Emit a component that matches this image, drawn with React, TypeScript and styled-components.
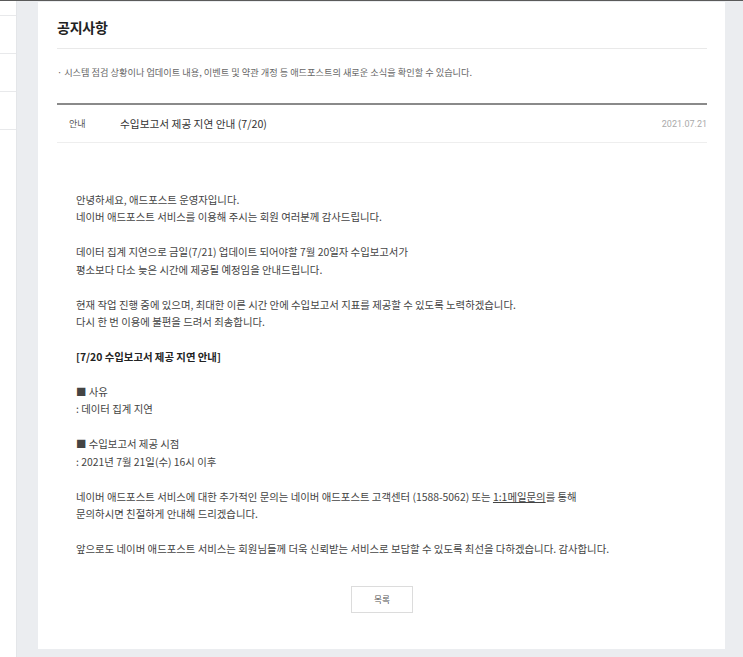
import React from "react";
import styled, { createGlobalStyle } from "styled-components";

const GlobalStyle = createGlobalStyle`
  html, body {
    margin: 0;
    padding: 0;
    background: #ebedf0;
  }
  body {
    font-family: "Noto Sans CJK KR", "Noto Sans", sans-serif;
    color: #444;
  }
  * {
    box-sizing: border-box;
  }
`;

const Page = styled.div`
  display: flex;
  height: 657px;
  border-top: 1px solid #5a5a5a;
  overflow: hidden;
`;

const SideNav = styled.ul`
  width: 17px;
  margin: 0;
  padding: 0;
  list-style: none;
  background: #fff;
  border-right: 1px solid #e4e6e9;
  flex-shrink: 0;
`;

const NavItem = styled.li<{ $first?: boolean }>`
  height: ${(p) => (p.$first ? "15px" : "38px")};
  border-bottom: 1px solid #e8e9eb;
`;

const Main = styled.main`
  flex: 1;
  padding: 1px 18px 8px 21px;
  display: flex;
`;

const Panel = styled.section`
  flex: 1;
  background: #fff;
  padding: 0 18px 33px 19px;
  display: flex;
  flex-direction: column;
`;

const Header = styled.header`
  height: 47px;
  display: flex;
  align-items: center;
  padding-top: 4px;
  border-bottom: 1px solid #e9e9e9;
`;

const Title = styled.h1`
  margin: 0;
  font-size: 14px;
  font-weight: 700;
  color: #222;
  letter-spacing: -0.2px;
`;

const Desc = styled.p`
  margin: 0;
  padding: 17px 0 24px;
  font-size: 9.2px;
  line-height: 13px;
  color: #666;
  &::before {
    content: "·";
    margin-right: 2px;
  }
`;

const ArticleHead = styled.div`
  display: flex;
  align-items: center;
  height: 40px;
  border-top: 2px solid #8a8a8a;
  border-bottom: 1px solid #eeeeee;
  padding: 0 0 0 12px;
`;

const Category = styled.span`
  width: 51px;
  font-size: 9px;
  color: #555;
`;

const Subject = styled.span`
  flex: 1;
  font-size: 10.7px;
  color: #333;
`;

const DateText = styled.span`
  font-family: "Roboto", "Noto Sans", sans-serif;
  font-size: 9px;
  color: #aaa;
`;

const Body = styled.div`
  padding: 48px 0 0 19px;
  font-size: 10.4px;
  line-height: 17.45px;
  color: #444;
`;

const Para = styled.p<{ $bold?: boolean }>`
  margin: 0 0 17.45px;
  font-weight: ${(p) => (p.$bold ? 700 : 400)};
  color: ${(p) => (p.$bold ? "#222" : "#444")};
  &:last-child {
    margin-bottom: 0;
  }
`;

const MailLink = styled.a`
  color: #444;
  text-decoration: underline;
`;

const Footer = styled.div`
  display: flex;
  justify-content: center;
  padding-top: 29px;
`;

const ListButton = styled.button`
  width: 62px;
  height: 27px;
  background: #fff;
  border: 1px solid #dcdcdc;
  font-family: inherit;
  font-size: 8.7px;
  color: #555;
  cursor: pointer;
`;

export default function App() {
  return (
    <>
      <GlobalStyle />
      <Page>
        <SideNav>
          <NavItem $first />
          <NavItem />
          <NavItem />
          <NavItem />
        </SideNav>
        <Main>
          <Panel>
            <Header>
              <Title>공지사항</Title>
            </Header>
            <Desc>
              시스템 점검 상황이나 업데이트 내용, 이벤트 및 약관 개정 등 애드포스트의 새로운 소식을 확인할 수 있습니다.
            </Desc>
            <ArticleHead>
              <Category>안내</Category>
              <Subject>수입보고서 제공 지연 안내 (7/20)</Subject>
              <DateText>2021.07.21</DateText>
            </ArticleHead>
            <Body>
              <Para>
                안녕하세요, 애드포스트 운영자입니다.
                <br />
                네이버 애드포스트 서비스를 이용해 주시는 회원 여러분께 감사드립니다.
              </Para>
              <Para>
                데이터 집계 지연으로 금일(7/21) 업데이트 되어야할 7월 20일자 수입보고서가
                <br />
                평소보다 다소 늦은 시간에 제공될 예정임을 안내드립니다.
              </Para>
              <Para>
                현재 작업 진행 중에 있으며, 최대한 이른 시간 안에 수입보고서 지표를 제공할 수 있도록 노력하겠습니다.
                <br />
                다시 한 번 이용에 불편을 드려서 죄송합니다.
              </Para>
              <Para $bold>[7/20 수입보고서 제공 지연 안내]</Para>
              <Para>
                ■ 사유
                <br />: 데이터 집계 지연
              </Para>
              <Para>
                ■ 수입보고서 제공 시점
                <br />: 2021년 7월 21일(수) 16시 이후
              </Para>
              <Para>
                네이버 애드포스트 서비스에 대한 추가적인 문의는 네이버 애드포스트 고객센터 (1588-5062) 또는{" "}
                <MailLink>1:1메일문의</MailLink>를 통해
                <br />
                문의하시면 친절하게 안내해 드리겠습니다.
              </Para>
              <Para>
                앞으로도 네이버 애드포스트 서비스는 회원님들께 더욱 신뢰받는 서비스로 보답할 수 있도록 최선을 다하겠습니다. 감사합니다.
              </Para>
            </Body>
            <Footer>
              <ListButton>목록</ListButton>
            </Footer>
          </Panel>
        </Main>
      </Page>
    </>
  );
}
